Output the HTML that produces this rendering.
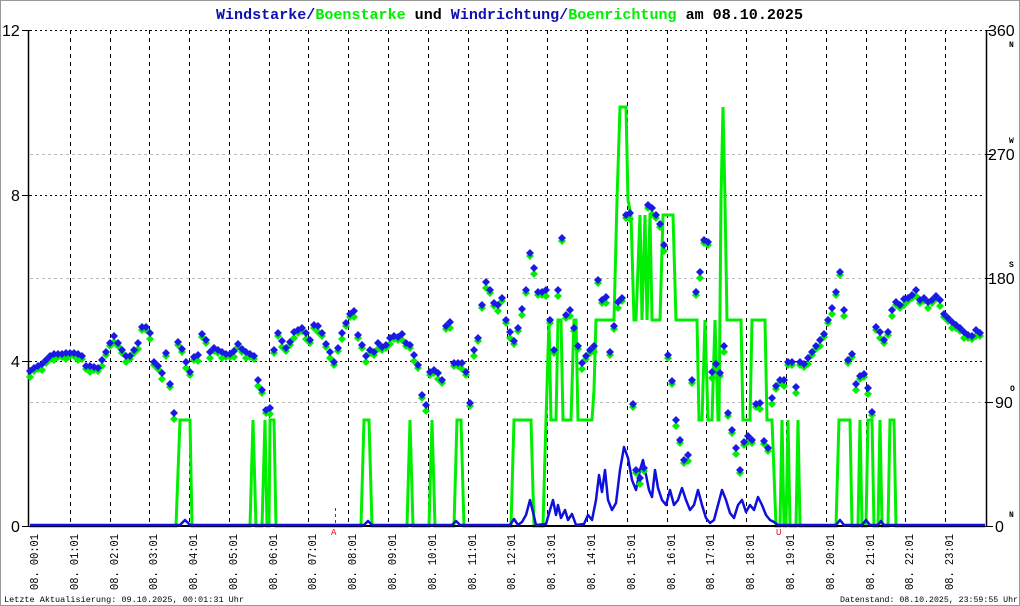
<!DOCTYPE html>
<html><head><meta charset="utf-8"><style>
html,body{margin:0;padding:0;background:#fff}
svg{display:block}
text{font-family:"Liberation Mono",monospace}
</style></head><body>
<svg id="s" width="1020" height="606" viewBox="0 0 1020 606" xmlns="http://www.w3.org/2000/svg">
<rect x="0.5" y="0.5" width="1019" height="605" fill="#fff" stroke="#999"/>
<g id="grid"></g>
<text x="216" y="19" font-size="15" font-weight="bold" textLength="587" lengthAdjust="spacingAndGlyphs"><tspan fill="#1010b0">Windstarke/</tspan><tspan fill="#00ee00">Boenstarke</tspan><tspan fill="#000"> und </tspan><tspan fill="#1010b0">Windrichtung/</tspan><tspan fill="#00ee00">Boenrichtung</tspan><tspan fill="#000"> am 08.10.2025</tspan></text>
<g font-family="Liberation Sans,sans-serif" font-size="16" fill="#000">
<text x="2" y="36" style="font-family:'Liberation Sans',sans-serif">12</text>
<text x="11" y="201" style="font-family:'Liberation Sans',sans-serif">8</text>
<text x="11" y="367" style="font-family:'Liberation Sans',sans-serif">4</text>
<text x="11" y="532" style="font-family:'Liberation Sans',sans-serif">0</text>
<text x="988" y="36" style="font-family:'Liberation Sans',sans-serif">360</text>
<text x="988" y="160" style="font-family:'Liberation Sans',sans-serif">270</text>
<text x="988" y="284" style="font-family:'Liberation Sans',sans-serif">180</text>
<text x="995" y="408" style="font-family:'Liberation Sans',sans-serif">90</text>
<text x="995" y="532" style="font-family:'Liberation Sans',sans-serif">0</text>
</g>
<g font-size="8" font-weight="bold" fill="#000">
<text x="1009" y="47">N</text><text x="1009" y="143">W</text><text x="1009" y="267">S</text><text x="1010" y="391">O</text><text x="1009" y="517">N</text>
</g>
<g id="data"></g>
<text x="4" y="602" font-size="8.5" textLength="240" lengthAdjust="spacingAndGlyphs">Letzte Aktualisierung: 09.10.2025, 00:01:31 Uhr</text>
<text x="840" y="602" font-size="8.5" textLength="178" lengthAdjust="spacingAndGlyphs">Datenstand: 08.10.2025, 23:59:55 Uhr</text>
</svg>
<script>
var NS="http://www.w3.org/2000/svg";
function el(p,t,a,txt){var e=document.createElementNS(NS,t);for(var k in a)e.setAttribute(k,a[k]);if(txt)e.textContent=txt;p.appendChild(e);return e;}
var g=document.getElementById('grid'),d=document.getElementById('data');
[154,278,402].forEach(function(y){el(g,'line',{x1:30,x2:985,y1:y+.5,y2:y+.5,stroke:'#bbb','stroke-dasharray':'3,3'});});
[30,195,361].forEach(function(y){el(g,'line',{x1:30,x2:985,y1:y+.5,y2:y+.5,stroke:'#000','stroke-dasharray':'2,3'});});
for(var h=1;h<=24;h++){var x=Math.round(29.9+39.8*h)+.5;if(h<24)el(g,'line',{x1:x,x2:x,y1:30,y2:526,stroke:'#000','stroke-dasharray':'4,4'});
 var lx=Math.round(29.9+39.8*(h-1))+8;var hh=('0'+(h-1)).slice(-2);el(g,'text',{x:0,y:0,'font-size':'12',transform:'translate('+lx+',590) rotate(-90)',textLength:56,lengthAdjust:'spacingAndGlyphs'},'08. '+hh+':01');}
el(g,'line',{x1:28.5,x2:28.5,y1:30,y2:527,stroke:'#000','stroke-width':1.5});
el(g,'line',{x1:986.5,x2:986.5,y1:30,y2:527,stroke:'#000','stroke-width':1.5});
[30,195,361,526].forEach(function(y){el(g,'line',{x1:22,x2:30,y1:y+.5,y2:y+.5,stroke:'#000'});});
[30,154,278,402,526].forEach(function(y){el(g,'line',{x1:985,x2:993,y1:y+.5,y2:y+.5,stroke:'#000'});});
el(g,'line',{x1:335.5,x2:335.5,y1:508,y2:526,stroke:'#e00','stroke-dasharray':'3,3'});
el(g,'text',{x:331,y:535,'font-size':'9',fill:'#e00'},'A');
el(g,'text',{x:776,y:535,'font-size':'9',fill:'#e00'},'U');
var gp="30,526 176,526 180,420 190,420 192,526 250,526 253,420 256,526 262,526 265,420 267,526 269,526 270,420 274,420 276,526 361,526 364,420 369,420 372,526 407,526 410,420 413,526 429,526 432,420 435,526 454,526 457,420 461,420 464,526 511,526 514,420 531,420 534,526 543,526 546,420 549,320 551,420 556,420 558,320 561,320 563,420 567,420 571,420 574,320 576,320 578,420 592,420 594,390 596,320 614,320 617,200 620,107 626,107 628,200 631,215 634,320 636,320 640,215 642,320 645,215 647,320 650,215 652,320 660,320 663,215 673,215 676,320 697,320 699,420 702,420 705,320 708,420 712,420 715,320 718,420 719,420 721,200 723,107 725,200 727,320 741,320 743,420 750,420 752,320 765,320 767,420 772,420 776,526 780,526 782,420 784,526 786,526 788,420 790,526 796,526 798,420 800,526 836,526 839,420 850,420 852,526 858,526 860,420 862,526 866,526 868,420 872,420 874,526 878,526 880,420 882,526 888,526 890,420 894,420 896,526 985,526";
el(d,'polyline',{points:gp,fill:'none',stroke:'#00ee00','stroke-width':3,'stroke-linejoin':'miter'});
el(d,'line',{x1:30,x2:985,y1:526,y2:526,stroke:'#000','stroke-width':2});
var bp="30,525 180,525 185,520 190,525 364,525 368,521 372,525 452,525 456,521 460,525 510,525 514,519 518,525 522,522 526,515 530,500 533,512 536,525 546,524 550,510 553,500 556,515 558,505 561,518 565,510 568,520 572,514 576,525 584,524 588,515 592,520 596,500 599,475 602,492 605,470 608,500 612,510 616,503 620,470 624,447 628,458 632,480 636,490 640,470 643,460 646,475 649,490 652,497 655,470 658,488 662,500 666,505 670,490 674,505 678,500 682,488 686,500 690,510 694,505 698,490 702,505 706,518 710,523 714,520 718,505 722,490 726,500 730,513 734,518 738,505 742,500 746,512 750,505 754,510 758,497 762,505 766,515 770,520 774,522 778,525 836,525 840,520 844,525 862,525 866,520 870,525 878,525 881,521 884,525 985,525";
el(d,'polyline',{points:bp,fill:'none',stroke:'#1010dd','stroke-width':2.5,'stroke-linejoin':'round'});
var pts=[30,371,34,368,38,366,42,364,46,360,50,356,54,354,58,354,62,354,66,353,70,353,74,353,78,354,82,356,86,366,90,366,94,367,98,368,102,360,106,352,110,343,114,336,118,343,122,350,126,356,130,356,134,350,138,343,142,327,146,327,150,333,154,362,158,366,162,373,166,353,170,384,174,413,178,342,182,349,186,362,190,372,194,357,198,355,202,334,206,340,210,352,214,348,218,350,222,352,226,354,230,354,234,351,238,344,242,349,246,352,250,354,254,356,258,380,262,390,266,410,270,408,274,350,278,333,282,341,286,348,290,342,294,332,298,330,302,328,306,333,310,340,314,325,318,326,322,333,326,344,330,352,334,362,338,348,342,333,346,323,350,314,354,311,358,335,362,345,366,356,370,350,374,352,378,343,382,347,386,345,390,338,394,336,398,337,402,334,406,343,410,345,414,355,418,365,422,395,426,405,430,372,434,370,438,373,442,380,446,326,450,322,454,363,458,363,462,363,466,372,470,403,474,350,478,338,482,305,486,282,490,290,494,303,498,305,502,298,506,320,510,332,514,341,518,328,522,309,526,290,530,253,534,268,538,292,542,292,546,290,550,320,554,350,558,290,562,238,566,315,570,310,574,328,578,346,582,363,586,356,590,350,594,346,598,280,602,300,606,297,610,352,614,326,618,302,622,298,626,215,630,213,633,404,636,470,640,478,644,468,648,205,652,208,656,215,660,224,664,245,668,355,672,381,676,420,680,440,684,460,688,455,692,380,696,292,700,272,704,240,708,242,712,372,716,364,720,373,724,346,728,413,732,430,736,448,740,470,744,442,748,436,752,440,756,404,760,403,764,441,768,448,772,398,776,386,780,380,784,380,788,362,792,362,796,387,800,362,804,364,808,358,812,352,816,346,820,340,824,334,828,320,832,308,836,292,840,272,844,310,848,360,852,354,856,384,860,376,864,374,868,388,872,412,876,327,880,332,884,340,888,332,892,310,896,302,900,305,904,299,908,298,912,295,916,290,920,300,924,298,928,302,932,300,936,296,940,300,944,314,948,318,952,322,956,325,960,328,964,332,968,335,972,336,976,330,980,333];
function dia(x,y,c){el(d,'polygon',{points:(x)+','+(y-4)+' '+(x+4)+','+y+' '+x+','+(y+4)+' '+(x-4)+','+y,fill:c});}
for(var i=0;i<pts.length;i+=2){var off=((i/2)%3==0)?6:3;dia(pts[i],pts[i+1]+off,'#00ee00');}
for(var i=0;i<pts.length;i+=2){dia(pts[i],pts[i+1],'#1a1ae6');}
</script>
</body></html>
